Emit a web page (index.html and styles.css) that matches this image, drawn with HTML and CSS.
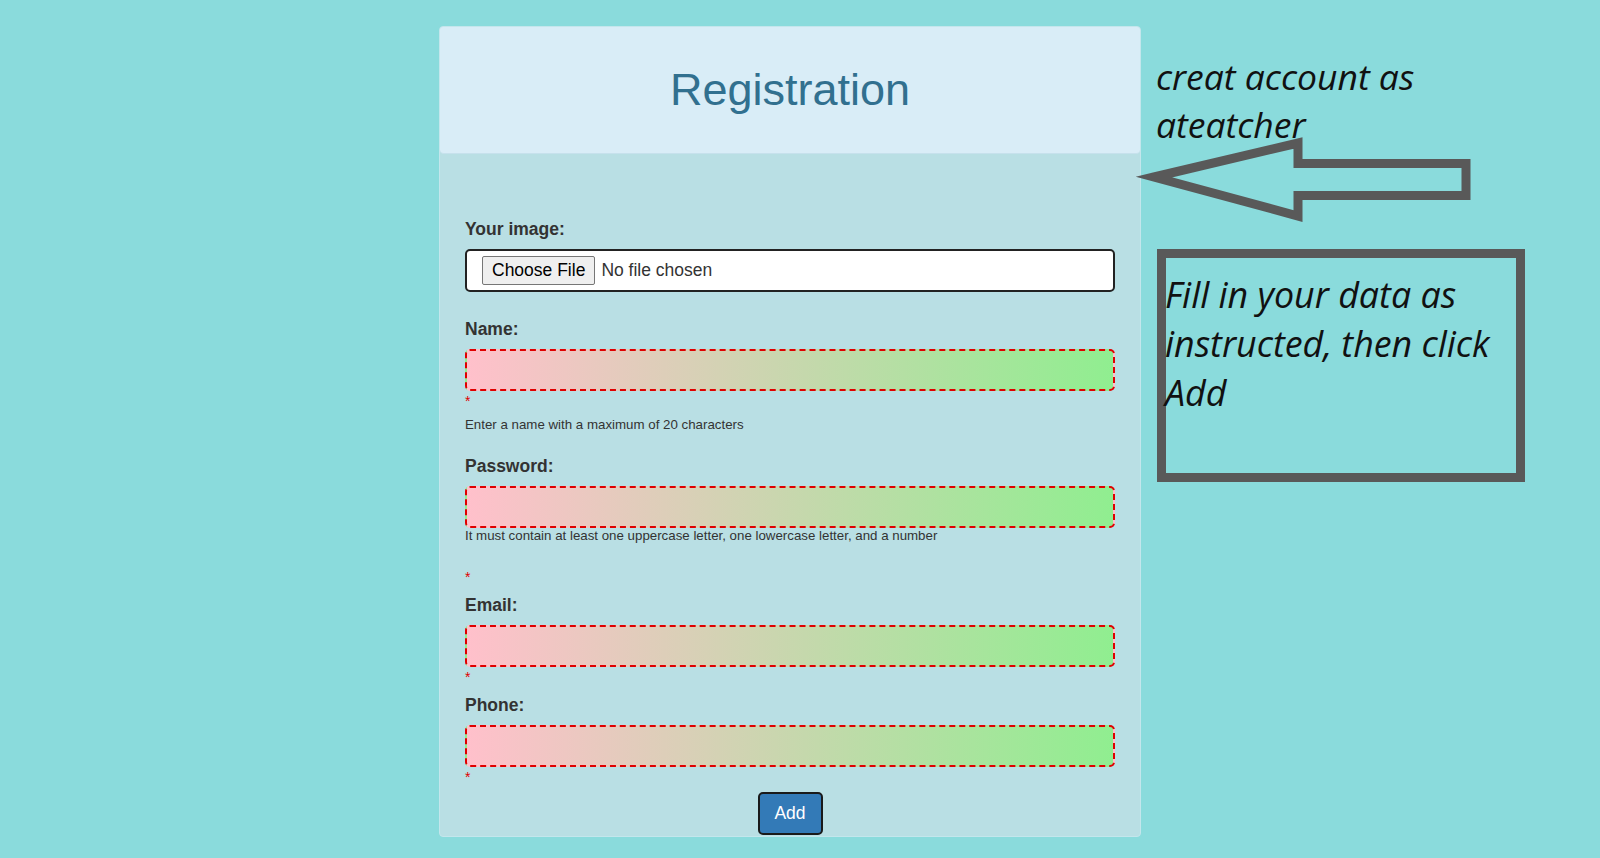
FILE: index.html
```html
<!DOCTYPE html>
<html lang="en">
<head>
<meta charset="utf-8">
<title>Registration</title>
<link rel="stylesheet" href="styles.css">
</head>
<body>
<div class="page">
  <div class="panel">
    <div class="panel-heading"><h1>Registration</h1></div>
    <form class="panel-body">
      <div class="group group-file">
        <label>Your image:</label>
        <input type="file" class="file">
      </div>
      <div class="group">
        <label>Name:</label>
        <input type="text" class="field">
        <span class="req">*</span>
        <span class="hint">Enter a name with a maximum of 20 characters</span>
      </div>
      <div class="group">
        <label>Password:</label>
        <input type="password" class="field">
        <span class="hint">It must contain at least one uppercase letter, one lowercase letter, and a number</span>
        <span class="req">*</span>
      </div>
      <div class="group">
        <label>Email:</label>
        <input type="email" class="field">
        <span class="req">*</span>
      </div>
      <div class="group">
        <label>Phone:</label>
        <input type="text" class="field">
        <span class="req">*</span>
      </div>
      <div class="actions"><button type="button" class="btn-add">Add</button></div>
    </form>
  </div>

  <p class="note">creat account as<br>ateatcher</p>
  <svg class="arrow" viewBox="1100 120 400 120" width="400" height="120">
    <polygon points="1154,177 1298,143 1298,163.5 1466,163.5 1466,195.5 1298,195.5 1298,216" fill="none" stroke="#595959" stroke-width="9" stroke-miterlimit="10"/>
  </svg>
  <div class="note-box"><p>Fill in your data as<br>instructed, then click<br>Add</p></div>
</div>
</body>
</html>
```

FILE: styles.css
```css
html, body {
  margin: 0;
  padding: 0;
}

body {
  background: #8adbdc;
  font-family: "Liberation Sans", Arial, sans-serif;
  color: #333;
}

.page {
  position: relative;
  height: 858px;
  overflow: hidden;
  padding-top: 26px;
  box-sizing: border-box;
}

.panel {
  width: 702px;
  margin-left: 439px;
  box-sizing: border-box;
  background: #b9dfe4;
  border: 1px solid #c4e6ec;
  border-radius: 4px;
}

.panel-heading {
  height: 127px;
  box-sizing: border-box;
  background: #d9edf7;
  border-bottom: 1px solid #c6e1ec;
  border-radius: 3px 3px 4px 4px;
  display: flex;
  align-items: center;
  justify-content: center;
}

.panel-heading h1 {
  margin: 0;
  font-weight: normal;
  font-size: 45px;
  color: #31708f;
}

.panel-body {
  padding: 65px 25px 1px;
}

.group {
  margin-bottom: 2px;
}

.group-file {
  margin-bottom: 27px;
}

label {
  display: block;
  font-size: 17.5px;
  font-weight: bold;
  line-height: 20px;
  margin-bottom: 10px;
  color: #333;
}

.file {
  display: block;
  width: 100%;
  height: 43px;
  box-sizing: border-box;
  padding: 5px 15px;
  border: 2px solid #222;
  border-radius: 5px;
  background: #fff;
  font: 17.5px "Liberation Sans", Arial, sans-serif;
  color: #333;
}

.file::file-selector-button {
  font: inherit;
  color: #000;
  padding: 3px 9px;
  margin-right: 6px;
  border: 1px solid #767676;
  border-radius: 2px;
  background: #efefef;
}

.field {
  display: block;
  width: 100%;
  height: 42px;
  box-sizing: border-box;
  border: 2px dashed #e00000;
  border-radius: 5px;
  background: linear-gradient(to right, #ffc0cb, #90ee90);
}

.req {
  display: block;
  height: 26px;
  color: #e00000;
  font-size: 14px;
  line-height: 20px;
}

.hint {
  display: block;
  font-size: 13.3px;
  line-height: 15px;
  color: #333;
  margin-bottom: 24px;
}

.actions {
  text-align: center;
  margin-top: -3px;
}

.btn-add {
  width: 65px;
  height: 43px;
  background: #337ab7;
  color: #fff;
  border: 2px solid #1a1a1a;
  border-radius: 5px;
  font: 17.5px "Liberation Sans", Arial, sans-serif;
  vertical-align: top;
}

.note {
  position: absolute;
  left: 1156px;
  top: 52px;
  margin: 0;
  font: italic 35.5px/48px "Open Sans", sans-serif;
  color: #111;
}

.arrow {
  position: absolute;
  left: 1100px;
  top: 120px;
}

.note-box {
  position: absolute;
  left: 1157px;
  top: 249px;
  width: 368px;
  height: 233px;
  box-sizing: border-box;
  border: 9px solid #595959;
}

.note-box p {
  margin: 12px 0 0 -1px;
  font: italic 35.8px/49px "Open Sans", sans-serif;
  color: #111;
  white-space: nowrap;
}
```
